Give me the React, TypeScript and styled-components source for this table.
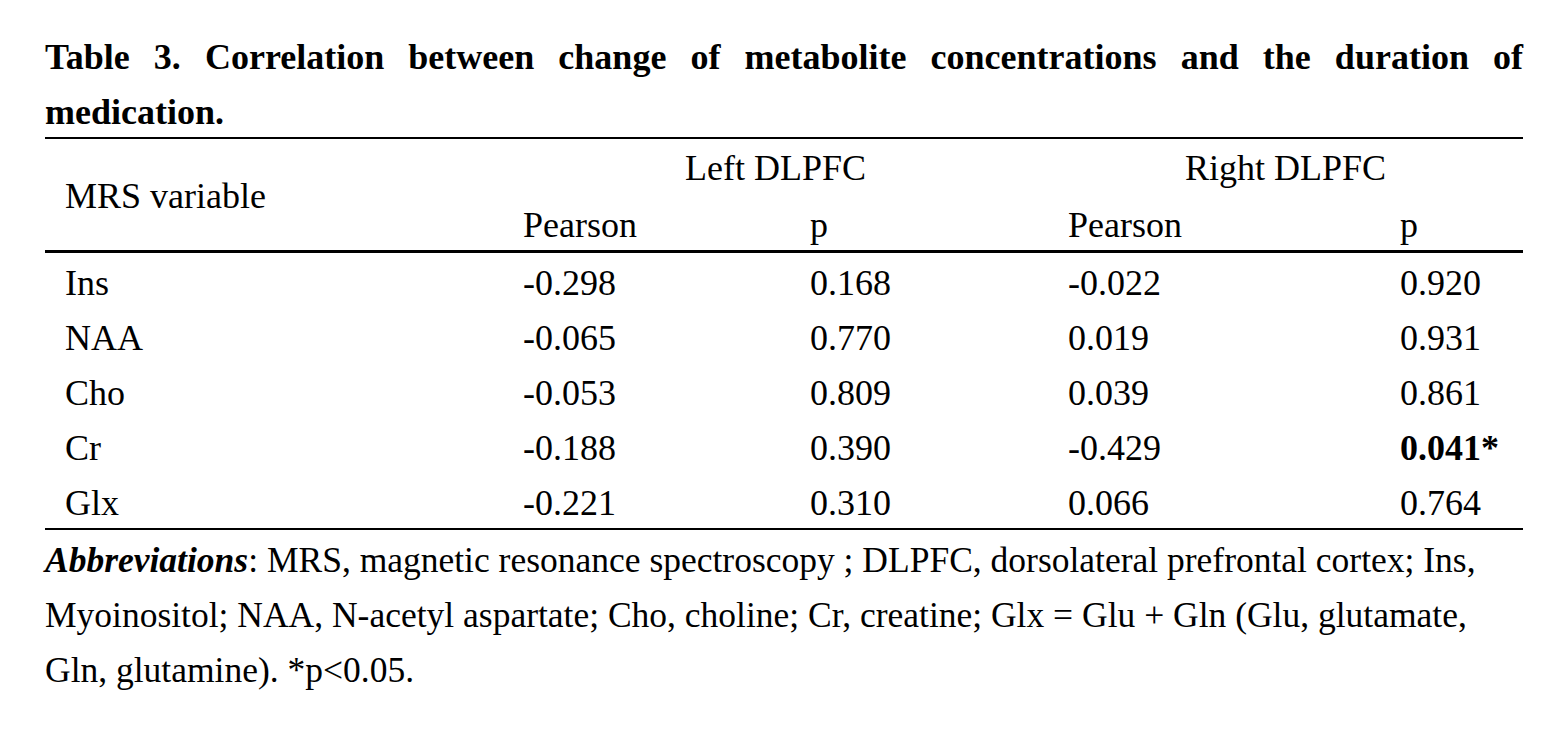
import React from "react";
import styled, { createGlobalStyle } from "styled-components";

const Global = createGlobalStyle`
  html, body { margin: 0; padding: 0; background: #ffffff; }
  body { font-family: "Liberation Serif", "Times New Roman", serif; color: #000; }
`;

const Page = styled.div`
  width: 1478px;
  padding: 30px 0 0 45px;
`;

const Title = styled.div`
  font-weight: bold;
  font-size: 36px;
  line-height: 55px;
  text-align: justify;
  text-align-last: left;
`;

const Table = styled.table`
  width: 1478px;
  border-collapse: collapse;
  table-layout: fixed;
  font-size: 36px;
  border-top: 2px solid #000;
  border-bottom: 2px solid #000;
  margin-top: -3px;
`;

const HeadRow = styled.tr<{ $last?: boolean }>`
  border-bottom: ${(p) => (p.$last ? "3px solid #000" : "none")};
`;

const Cell = styled.td<{ $align?: "left" | "center"; $bold?: boolean; $h?: number; $pt?: number }>`
  padding: ${(p) => p.$pt ?? 0}px 0 0 ${(p) => (p.$align === "center" ? "0" : "20px")};
  height: ${(p) => (p.$h ?? 55) - (p.$pt ?? 0)}px;
  line-height: 40px;
  text-align: ${(p) => p.$align ?? "left"};
  vertical-align: middle;
  font-weight: ${(p) => (p.$bold ? "bold" : "normal")};
  white-space: nowrap;
`;

const Note = styled.div`
  font-size: 35.5px;
  line-height: 55px;
  margin-top: 3px;
  width: 1478px;
`;

const Abbr = styled.span`
  font-weight: bold;
  font-style: italic;
`;

const rows: [string, string, string, string, string, boolean?][] = [
  ["Ins", "-0.298", "0.168", "-0.022", "0.920"],
  ["NAA", "-0.065", "0.770", "0.019", "0.931"],
  ["Cho", "-0.053", "0.809", "0.039", "0.861"],
  ["Cr", "-0.188", "0.390", "-0.429", "0.041*", true],
  ["Glx", "-0.221", "0.310", "0.066", "0.764"],
];

export default function App() {
  return (
    <Page>
      <Global />
      <Title>
        Table 3. Correlation between change of metabolite concentrations and the duration of medication.
      </Title>
      <Table>
        <colgroup>
          <col style={{ width: 458 }} />
          <col style={{ width: 287 }} />
          <col style={{ width: 258 }} />
          <col style={{ width: 332 }} />
          <col style={{ width: 143 }} />
        </colgroup>
        <thead>
          <HeadRow>
            <Cell rowSpan={2} $pt={2}>MRS variable</Cell>
            <Cell colSpan={2} $align="center" $h={56} $pt={2}>Left DLPFC</Cell>
            <Cell colSpan={2} $align="center" $h={56} $pt={2}>Right DLPFC</Cell>
          </HeadRow>
          <HeadRow $last>
            <Cell $h={55} $pt={4}>Pearson</Cell>
            <Cell $h={55} $pt={4}>p</Cell>
            <Cell $h={55} $pt={4}>Pearson</Cell>
            <Cell $h={55} $pt={4}>p</Cell>
          </HeadRow>
        </thead>
        <tbody>
          {rows.map(([v, a, b, c, d, bold]) => (
            <tr key={v}>
              <Cell $pt={4}>{v}</Cell>
              <Cell $pt={4}>{a}</Cell>
              <Cell $pt={4}>{b}</Cell>
              <Cell $pt={4}>{c}</Cell>
              <Cell $pt={4} $bold={bold}>{d}</Cell>
            </tr>
          ))}
        </tbody>
      </Table>
      <Note>
        <Abbr>Abbreviations</Abbr>: MRS, magnetic resonance spectroscopy ; DLPFC, dorsolateral prefrontal cortex; Ins,
        <br />
        Myoinositol; NAA, N-acetyl aspartate; Cho, choline; Cr, creatine; Glx = Glu + Gln (Glu, glutamate,
        <br />
        Gln, glutamine). *p&lt;0.05.
      </Note>
    </Page>
  );
}
